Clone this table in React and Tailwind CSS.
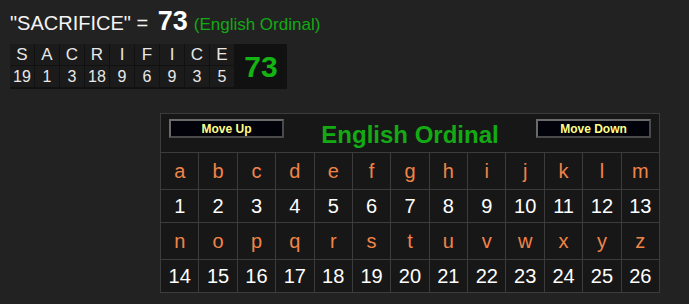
const WORD = [
  ['S', 19], ['A', 1], ['C', 3], ['R', 18], ['I', 9], ['F', 6], ['I', 9], ['C', 3], ['E', 5],
]

const LETTERS = 'abcdefghijklmnopqrstuvwxyz'.split('')

function Btn({ children }) {
  return (
    <button className="w-[115px] h-[19px] bg-[#02020a] border-2 border-t-[#6a6a6a] border-l-[#6a6a6a] border-r-[#4a4a4a] border-b-[#4a4a4a] text-[#ffff88] text-[12px] font-bold leading-none">
      {children}
    </button>
  )
}

function LetterRow({ items }) {
  return (
    <>
      {items.map((l) => (
        <div
          key={l}
          className="h-[37px] flex items-center justify-center border-r border-b border-[#3c3c3c] text-[#f08448] text-[20px]"
        >
          {l}
        </div>
      ))}
    </>
  )
}

function NumberRow({ from }) {
  return (
    <>
      {Array.from({ length: 13 }, (_, i) => from + i).map((n) => (
        <div
          key={n}
          className="h-[33px] flex items-center justify-center border-r border-b border-[#3c3c3c] text-white text-[20px]"
        >
          {n}
        </div>
      ))}
    </>
  )
}

export default function App() {
  return (
    <div className="min-h-screen bg-[#222222] font-['Liberation_Sans',Arial,sans-serif] text-white">
      <div className="pl-[10px] pt-[8px]">
        <div className="flex items-baseline h-[30px] whitespace-pre leading-none">
          <span className="text-[20px] text-[#f4f4f4]">"SACRIFICE" = </span>
          <span className="text-[27px] font-bold text-white ml-[4px]">73</span>
          <span className="text-[17px] text-[#14aa14] ml-[6px]">(English Ordinal)</span>
        </div>

        <div className="mt-[6px] flex w-fit bg-[#111] gap-px">
          {WORD.map(([l, n], i) => (
            <div key={i} className="flex flex-col gap-px w-[24px]">
              <div className="h-[21px] bg-[#1b1b1b] flex items-center justify-center text-[17px] text-[#e8e8e8]">{l}</div>
              <div className="h-[21px] bg-[#1b1b1b] flex items-center justify-center text-[16px] text-[#e8e8e8]">{n}</div>
            </div>
          ))}
          <div className="w-[52px] bg-[#111] flex items-center justify-center text-[30px] font-bold text-[#14b414]">
            73
          </div>
        </div>
      </div>

      <div className="ml-[160px] mt-[24px] w-[500px] bg-[#171717] border-l border-t border-[#3c3c3c] grid grid-cols-[repeat(13,minmax(0,1fr))]">
        <div className="col-span-13 h-[39px] border-r border-b border-[#3c3c3c] flex items-start justify-between px-[8px] pt-[5px] relative">
          <Btn>Move Up</Btn>
          <span className="absolute left-0 right-0 top-[3px] text-center text-[24px] font-bold text-[#14aa14] pointer-events-none">
            English Ordinal
          </span>
          <Btn>Move Down</Btn>
        </div>
        <LetterRow items={LETTERS.slice(0, 13)} />
        <NumberRow from={1} />
        <LetterRow items={LETTERS.slice(13)} />
        <NumberRow from={14} />
      </div>
    </div>
  )
}
